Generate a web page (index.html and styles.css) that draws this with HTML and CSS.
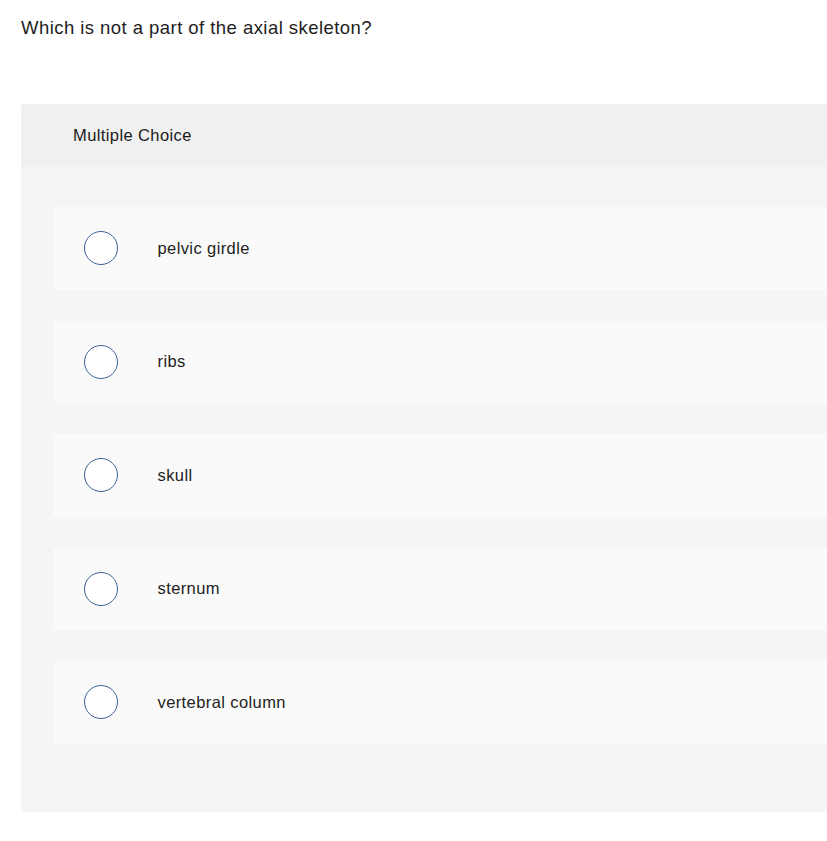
FILE: index.html
```html
<!DOCTYPE html>
<html>
<head>
<meta charset="utf-8">
<link rel="stylesheet" href="styles.css">
</head>
<body>
<div class="page">
  <p class="question">Which is not a part of the axial skeleton?</p>
  <div class="card">
    <div class="card-header">Multiple Choice</div>
    <div class="card-body">
      <label class="option"><span class="radio"></span><span class="label">pelvic girdle</span></label>
      <label class="option"><span class="radio"></span><span class="label">ribs</span></label>
      <label class="option"><span class="radio"></span><span class="label">skull</span></label>
      <label class="option"><span class="radio"></span><span class="label">sternum</span></label>
      <label class="option"><span class="radio"></span><span class="label">vertebral column</span></label>
    </div>
  </div>
</div>
</body>
</html>
```
FILE: styles.css
```css
html, body {
  margin: 0;
  padding: 0;
  background: #ffffff;
  overflow: hidden;
}
body {
  font-family: "Liberation Sans", "Lato", sans-serif;
  color: #1a1a1a;
}
.page {
  padding: 14px 0 0 21px;
  width: 860px;
}
.question {
  margin: 0;
  font-size: 18.5px;
  letter-spacing: 0.45px;
  line-height: 27px;
  color: #1e1e1e;
}
.card {
  margin-top: 63px;
  background: #f5f5f5;
  border-radius: 4px;
  padding-bottom: 68px;
}
.card-header {
  background: #f0f0f0;
  height: 63px;
  box-sizing: border-box;
  padding-left: 52px;
  display: flex;
  align-items: center;
  font-size: 16.5px;
  letter-spacing: 0.4px;
  border-radius: 4px 4px 0 0;
}
.card-body {
  padding: 40px 0 0 32px;
  display: flex;
  flex-direction: column;
  gap: 31px;
}
.option {
  display: flex;
  align-items: center;
  height: 82.5px;
  background: #fafafa;
  border-radius: 4px;
  padding-left: 31px;
}
.radio {
  width: 32px;
  height: 32px;
  border: 1.8px solid #3a6193;
  border-radius: 50%;
  background: #ffffff;
  flex: none;
}
.label {
  margin-left: 39.5px;
  font-size: 16.5px;
  letter-spacing: 0.4px;
  color: #1e1e1e;
}
```
